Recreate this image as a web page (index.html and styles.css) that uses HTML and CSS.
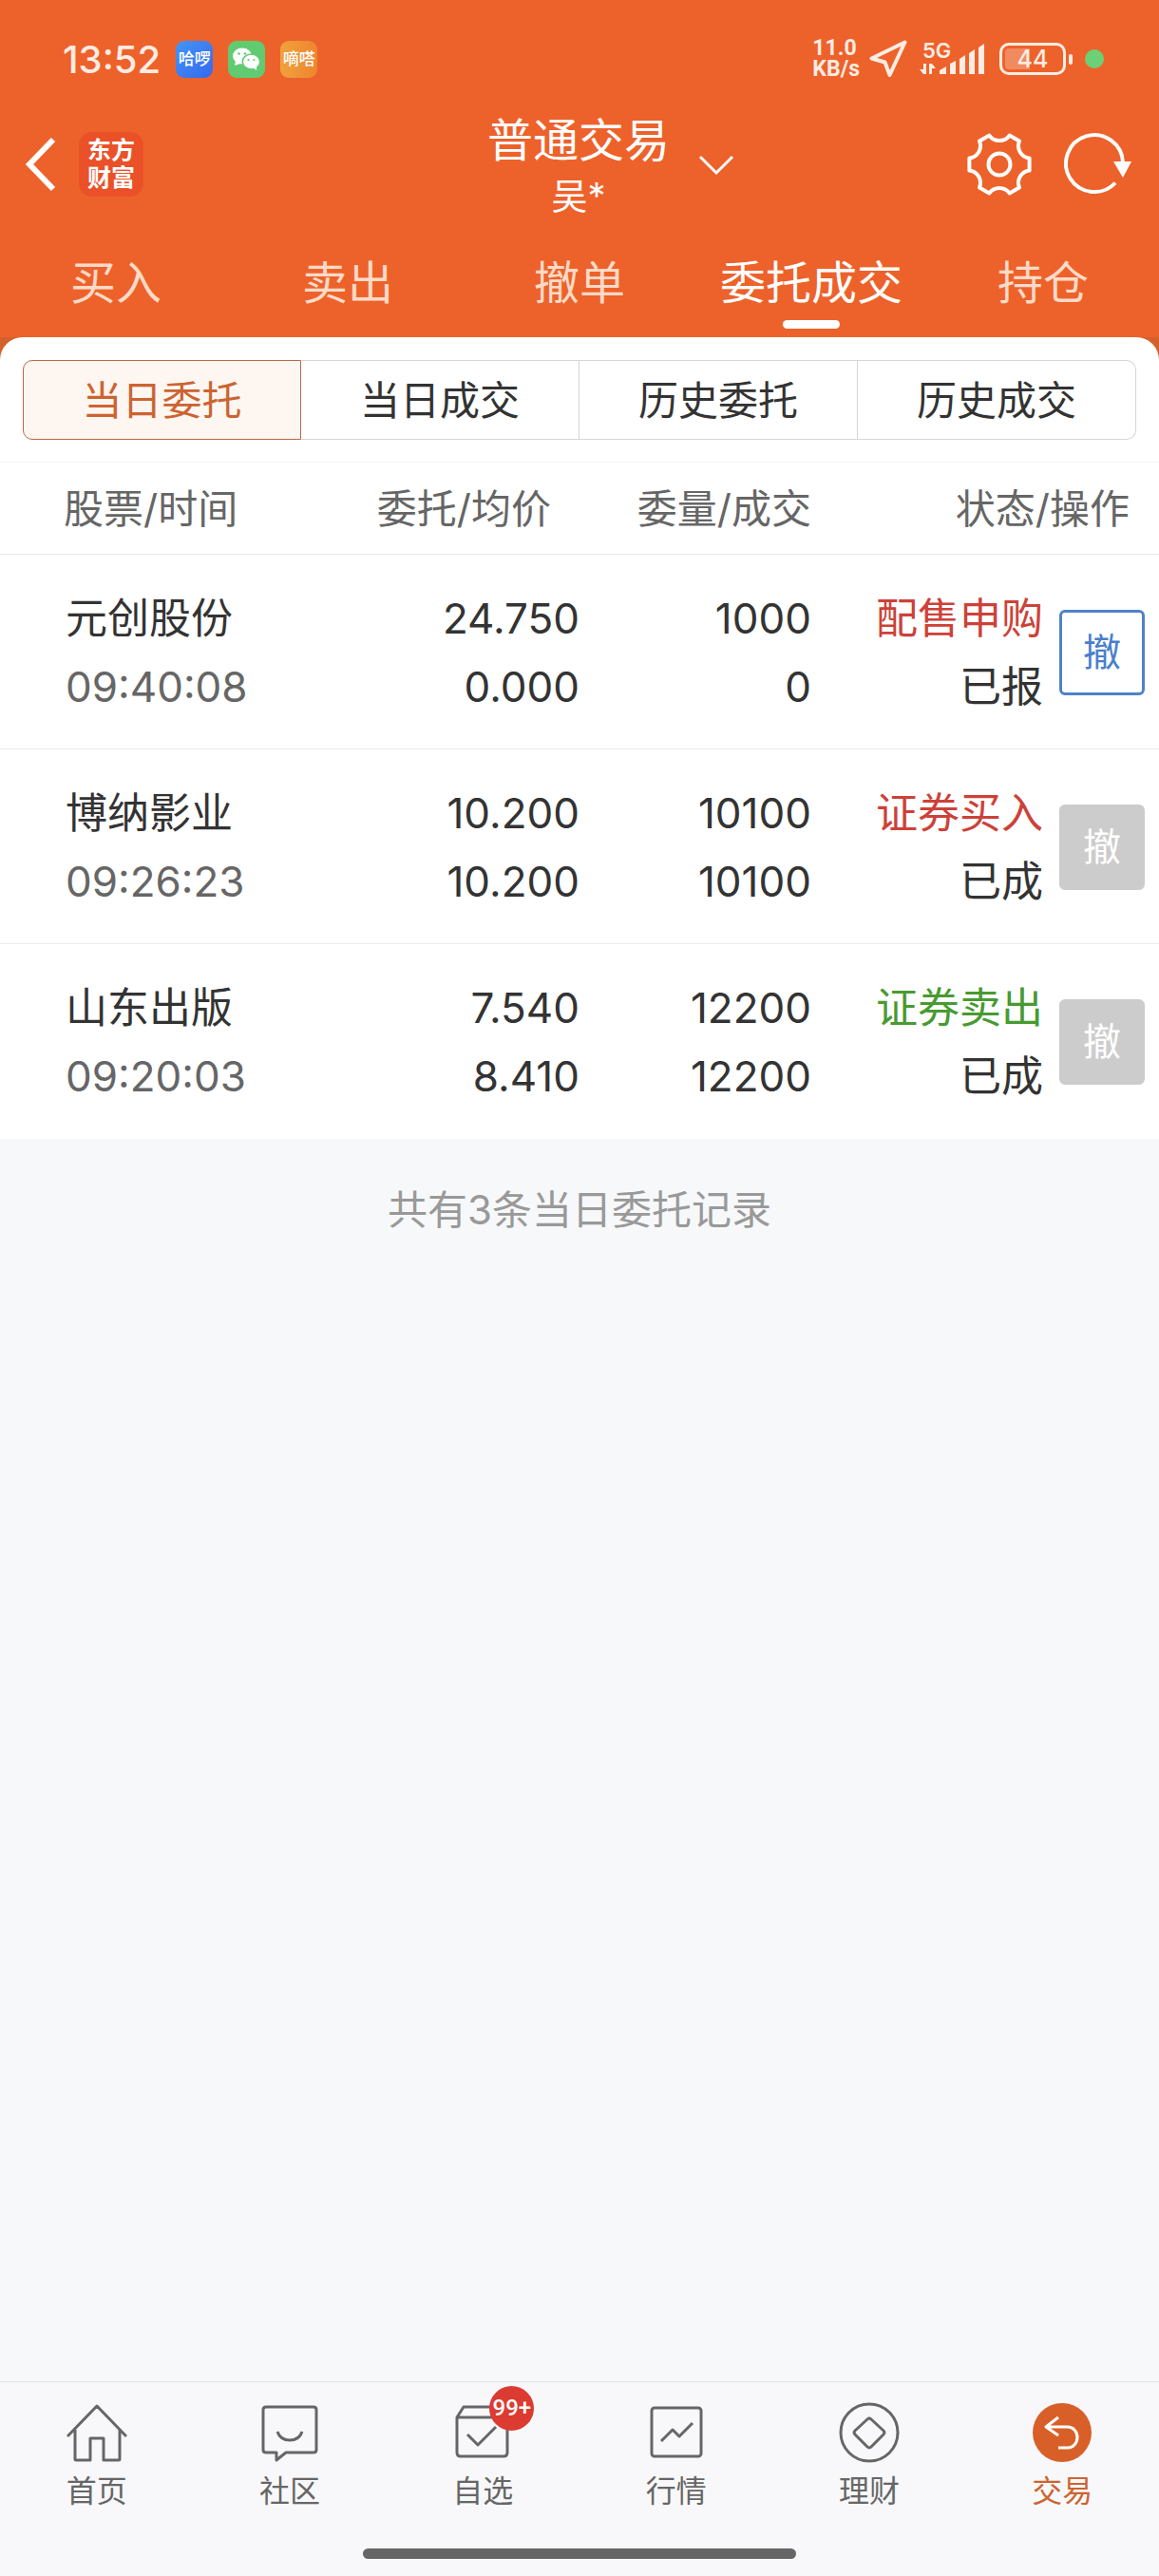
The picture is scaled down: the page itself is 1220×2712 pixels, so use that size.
FILE: index.html
```html
<!DOCTYPE html>
<html lang="zh-CN">
<head>
  <meta charset="UTF-8">
  <meta name="viewport" content="width=device-width, initial-scale=1.0">
  <title>普通交易 - 委托成交</title>
  <link rel="stylesheet" href="styles.css">
</head>
<body>

<header class="header">
  <div class="status-bar">
    <span class="clock">13:52</span>
    <span class="app-icon app-haluo">哈啰</span>
    <span class="app-icon app-wechat">
      <svg viewBox="0 0 39 39" width="39" height="39">
        <ellipse cx="15" cy="16" rx="10" ry="8.5" fill="#fff"/>
        <path d="M8 21l-1 5 6-2z" fill="#fff"/>
        <ellipse cx="24.500" cy="22" rx="9.200" ry="8" fill="#fff" stroke="#60cb70" stroke-width="1.500"/>
        <path d="M26 28l4 3v-5z" fill="#fff"/>
        <g fill="#60cb70"><circle cx="11.500" cy="13.500" r="1.300"/><circle cx="18" cy="13.500" r="1.300"/><circle cx="21.500" cy="20" r="1.100"/><circle cx="27.500" cy="20" r="1.100"/></g>
      </svg>
    </span>
    <span class="app-icon app-dida">嘀嗒</span>
    <div class="status-right">
      <span class="speed">11.0<br>KB/s</span>
      <svg class="locate" viewBox="0 0 40 40" width="40" height="40">
        <path d="M37.500 2.500L2.500 19.500L16.500 23.500L21.500 37z" fill="none" stroke="#ffece3" stroke-width="4" stroke-linejoin="round"/>
      </svg>
      <span class="signal">
        <span class="signal-type">5G</span>
        <svg viewBox="0 0 70 34" width="70" height="34" fill="#ffece3">
          <path d="M4 22h3v11h-3l-4-5h4zM10 22h3l4 5h-4v6h-3z"/>
          <path d="M21 29l7-4v8h-7zM32 22l6-3v14h-6zM42 17l6-4v20h-6zM52 11l6-4v26h-6zM62 5l6-4v32h-6z"/>
        </svg>
      </span>
      <span class="battery"><span class="battery-level">44</span></span>
      <span class="mic-dot"></span>
    </div>
  </div>

  <div class="title-bar">
    <div class="title-left">
      <button class="icon-btn" aria-label="返回">
        <svg viewBox="0 0 34 60" width="34" height="60"><path d="M30 4L5 30L30 56" fill="none" stroke="#fff" stroke-width="6"/></svg>
      </button>
      <a class="logo" href="#">东方<br>财富</a>
    </div>
    <button class="account">
      <span class="account-name">普通交易</span>
      <span class="account-user">吴*</span>
      <svg class="account-arrow" viewBox="0 0 38 22" width="38" height="22"><path d="M2 2L19 19L36 2" fill="none" stroke="#fff" stroke-width="3"/></svg>
    </button>
    <div class="title-right">
      <button class="icon-btn" aria-label="设置">
        <svg viewBox="-36 -36 72 72" width="72" height="72" fill="none" stroke="#fff" stroke-width="4" stroke-linejoin="round">
          <path d="M10.600 -30.400L21 -24.400A13 13 0 0 0 31.600 -6.500V6.500A13 13 0 0 0 21 24.400L10.600 30.400A13 13 0 0 0 -10.600 30.400L-21 24.400A13 13 0 0 0 -31.600 6.500V-6.500A13 13 0 0 0 -21 -24.400L-10.600 -30.400A13 13 0 0 0 10.600 -30.400Z"/>
          <circle r="11.500"/>
        </svg>
      </button>
      <button class="icon-btn" aria-label="刷新">
        <svg viewBox="0 0 72 72" width="72" height="72">
          <path d="M54 55.500A30 30 0 1 1 62 34" fill="none" stroke="#fff" stroke-width="4"/>
          <path d="M52 33h19l-9 17z" fill="#fff"/>
        </svg>
      </button>
    </div>
  </div>

  <nav class="tabs">
    <a href="#">买入</a>
    <a href="#">卖出</a>
    <a href="#">撤单</a>
    <a href="#" class="active">委托成交</a>
    <a href="#">持仓</a>
  </nav>
</header>

<main>
  <div class="panel-wrap">
    <div class="panel">
      <div class="segments">
        <button class="active">当日委托</button>
        <button>当日成交</button>
        <button>历史委托</button>
        <button>历史成交</button>
      </div>

      <table class="orders">
        <thead>
          <tr>
            <th class="col-stock">股票/时间</th>
            <th class="col-price">委托/均价</th>
            <th class="col-amount">委量/成交</th>
            <th class="col-state">状态/操作</th>
          </tr>
        </thead>
        <tbody>
          <tr>
            <td>元创股份<br><span class="time">09:40:08</span></td>
            <td>24.750<br>0.000</td>
            <td>1000<br>0</td>
            <td>
              <div class="state">
                <span><span class="buy">配售申购</span><br>已报</span>
                <button class="cancel">撤</button>
              </div>
            </td>
          </tr>
          <tr>
            <td>博纳影业<br><span class="time">09:26:23</span></td>
            <td>10.200<br>10.200</td>
            <td>10100<br>10100</td>
            <td>
              <div class="state">
                <span><span class="buy">证券买入</span><br>已成</span>
                <button class="cancel" disabled>撤</button>
              </div>
            </td>
          </tr>
          <tr>
            <td>山东出版<br><span class="time">09:20:03</span></td>
            <td>7.540<br>8.410</td>
            <td>12200<br>12200</td>
            <td>
              <div class="state">
                <span><span class="sell">证券卖出</span><br>已成</span>
                <button class="cancel" disabled>撤</button>
              </div>
            </td>
          </tr>
        </tbody>
      </table>
    </div>
  </div>
  <p class="summary">共有3条当日委托记录</p>
</main>

<footer class="bottom">
  <nav class="bottom-nav">
    <a href="#">
      <svg viewBox="0 0 64 64" width="64" height="64"><path d="M1 36L32 4L63 36M9 29V60Q9 61 10 61H25V38H39V61H55Q56 61 56 60V29"/></svg>
      首页
    </a>
    <a href="#">
      <svg viewBox="0 0 64 64" width="64" height="64"><path d="M7 5H57Q60 5 60 8V50Q60 53 57 53H28L18 61V53H7Q4 53 4 50V8Q4 5 7 5ZM19 31Q22 40 32 40Q42 40 45 31"/></svg>
      社区
    </a>
    <a href="#">
      <span class="icon-box">
        <svg viewBox="0 0 64 64" width="64" height="64"><path d="M5 16L12 5H50L58 16V53Q58 57 54 57H9Q5 57 5 53ZM5 16H58M16 34L27 45L46 26"/></svg>
        <span class="badge">99+</span>
      </span>
      自选
    </a>
    <a href="#">
      <svg viewBox="0 0 64 64" width="64" height="64"><rect x="6" y="6" width="52" height="51" rx="3"/><path d="M16 41L28 29L35 36L49 22"/></svg>
      行情
    </a>
    <a href="#">
      <svg viewBox="0 0 64 64" width="64" height="64"><circle cx="32" cy="32" r="30"/><path d="M30 18Q32 16 34 18L47 30Q49 32 47 34L34 47Q32 49 30 47L17 34Q15 32 17 30Z"/></svg>
      理财
    </a>
    <a href="#" class="active">
      <svg viewBox="0 0 64 64" width="64" height="64"><circle class="disc" cx="32" cy="32" r="31"/><path d="M28 16L15 26L28 35M15 26H38A10 11 0 0 1 38 48H28"/></svg>
      交易
    </a>
  </nav>
  <div class="home-bar"></div>
</footer>

</body>
</html>
```

FILE: styles.css
```css
* { box-sizing: border-box; }
body { font-family: Inter, "Noto Sans CJK SC", sans-serif; background-color: #f7f8fa; color: #333; display: flex; flex-direction: column; min-height: 100vh; margin: 0; }
a { color: inherit; text-decoration: none; }
button { background: none; border: none; color: inherit; font: inherit; padding: 0; cursor: pointer; }
svg { display: block; }

/* header */
.header { background-color: #ed622b; color: #fff; }
.status-bar { display: flex; align-items: center; gap: 16px; height: 104px; padding: 20px 58px 0 66px; color: #ffece3; }
.clock { font-size: 40px; font-weight: 500; }
.app-icon { width: 39px; height: 39px; border-radius: 9px; color: #fff; font-size: 17px; font-weight: 500; line-height: 38px; text-align: center; white-space: nowrap; }
.app-haluo { background: linear-gradient(135deg, #4595f5, #3568ee); }
.app-wechat { background: #60cb70; }
.app-dida { background: linear-gradient(90deg, #f0a23c, #ed8530); }
.status-right { display: flex; align-items: center; margin-left: auto; }
.speed { font-family: Roboto, sans-serif; font-size: 23px; font-weight: 700; line-height: 22px; margin-right: 10px; }
.locate { margin-right: 13px; }
.signal { position: relative; margin-right: 14px; }
.signal-type { position: absolute; top: -3px; left: 3px; font-size: 22px; font-weight: 600; line-height: 22px; }
.battery { position: relative; width: 70px; height: 34px; padding: 3px; border: 3px solid #ffece3; border-radius: 10px; margin-right: 20px; }
.battery::after { content: ""; position: absolute; top: 9px; right: -10px; width: 4px; height: 11px; border-radius: 2px; background: #ffece3; }
.battery-level { display: block; height: 22px; border-radius: 4px; background: linear-gradient(90deg, #f28a60 44%, transparent 44%); font-size: 25px; font-weight: 500; line-height: 22px; text-align: center; }
.mic-dot { width: 20px; height: 20px; border-radius: 50%; background: #6bd076; }

.title-bar { display: grid; grid-template-columns: 1fr auto 1fr; align-items: center; height: 138px; padding: 0 28px 0 26px; }
.title-left { display: flex; align-items: center; gap: 23px; }
.title-right { display: flex; align-items: center; justify-content: flex-end; gap: 32px; }
.logo { width: 68px; height: 68px; padding-top: 5px; border-radius: 14px; background: #ea5129; font-size: 25px; font-weight: 700; line-height: 29px; text-align: center; }
.account { position: relative; display: flex; flex-direction: column; align-items: center; padding-top: 6px; }
.account-name { font-size: 48px; line-height: 60px; }
.account-user { font-size: 38px; line-height: 56px; }
.account-arrow { position: absolute; top: 51px; left: calc(100% + 30px); }

.tabs { display: grid; grid-template-columns: repeat(5, 1fr); height: 113px; font-size: 48px; line-height: 112px; text-align: center; color: #ffdac7; }
.tabs a { position: relative; }
.tabs .active { color: #fff; }
.tabs .active::after { content: ""; position: absolute; bottom: 9px; left: calc(50% - 30px); width: 60px; height: 9px; border-radius: 5px; background: #fff; }

/* order list */
main { flex: 1; }
.panel-wrap { background: linear-gradient(#d4602b 24px, #fff 24px); }
.panel { background: #fff; border-radius: 24px 24px 0 0; }
.segments { display: grid; grid-template-columns: repeat(4, 1fr); padding: 24px 24px 23px; border-bottom: 1px solid #f5f5f5; }
.segments button { height: 84px; padding-bottom: 5px; border: 1px solid #d6d6d6; border-left-width: 0; font-size: 42px; }
.segments button:first-child { border-radius: 10px 0 0 10px; }
.segments button:last-child { border-radius: 0 10px 10px 0; }
.segments .active { border: 1px solid #b96a45; background: #fdf6f1; color: #cc6431; }

.orders { width: 100%; table-layout: fixed; border-collapse: separate; border-spacing: 0; }
.orders th { height: 97px; padding: 0 0 5px; border-bottom: 1px solid #ebebeb; color: #666; font-size: 42px; font-weight: 400; text-align: right; white-space: nowrap; }
.orders th.col-stock { width: 25%; padding-left: 67px; text-align: left; }
.orders th.col-price { width: 25%; padding-right: 30px; }
.orders th.col-amount { width: 20%; }
.orders th.col-state { width: 30%; padding-right: 31px; }
.orders td { padding: 31px 0 29px; border-bottom: 1px solid #ebebeb; font-size: 44px; line-height: 72px; text-align: right; white-space: nowrap; }
.orders td:first-child { padding-left: 69px; text-align: left; }
.orders tr:last-child td { border-bottom-color: #fff; }
.time { color: #666; }
.state { display: flex; align-items: center; justify-content: flex-end; gap: 17px; padding-right: 15px; }
.buy { color: #cd4139; }
.sell { color: #489a31; }
.cancel { width: 90px; height: 90px; border: 3px solid #4f82c9; border-radius: 6px; color: #4a7fcb; font-size: 40px; line-height: 80px; }
.cancel:disabled { border-color: #ccc; background: #ccc; color: #fff; }
.summary { margin: 0; padding-top: 45px; color: #999; font-size: 42px; line-height: 60px; text-align: center; }

/* bottom navigation */
.bottom { padding-bottom: 18px; border-top: 1px solid #e3e3e5; background: #f8f8fa; }
.bottom-nav { display: grid; grid-template-columns: repeat(6, 1fr); padding-top: 21px; color: #666; font-size: 32px; line-height: 40px; }
.bottom-nav a { display: flex; flex-direction: column; align-items: center; gap: 10px; }
.bottom-nav svg { fill: none; stroke: #666; stroke-width: 3; stroke-linejoin: round; }
.bottom-nav .active { color: #cc6431; }
.bottom-nav .active svg { stroke: #fff; }
.bottom-nav .disc { fill: #d86028; stroke: none; }
.icon-box { position: relative; }
.badge { position: absolute; top: -17px; right: -22px; width: 47px; height: 47px; border-radius: 50%; background: #dc3b32; color: #fff; font-family: Roboto, sans-serif; font-size: 24px; font-weight: 500; line-height: 46px; text-align: center; }
.home-bar { width: 38%; max-width: 456px; height: 11px; margin: 40px auto 0; border-radius: 6px; background: #666; }
```
